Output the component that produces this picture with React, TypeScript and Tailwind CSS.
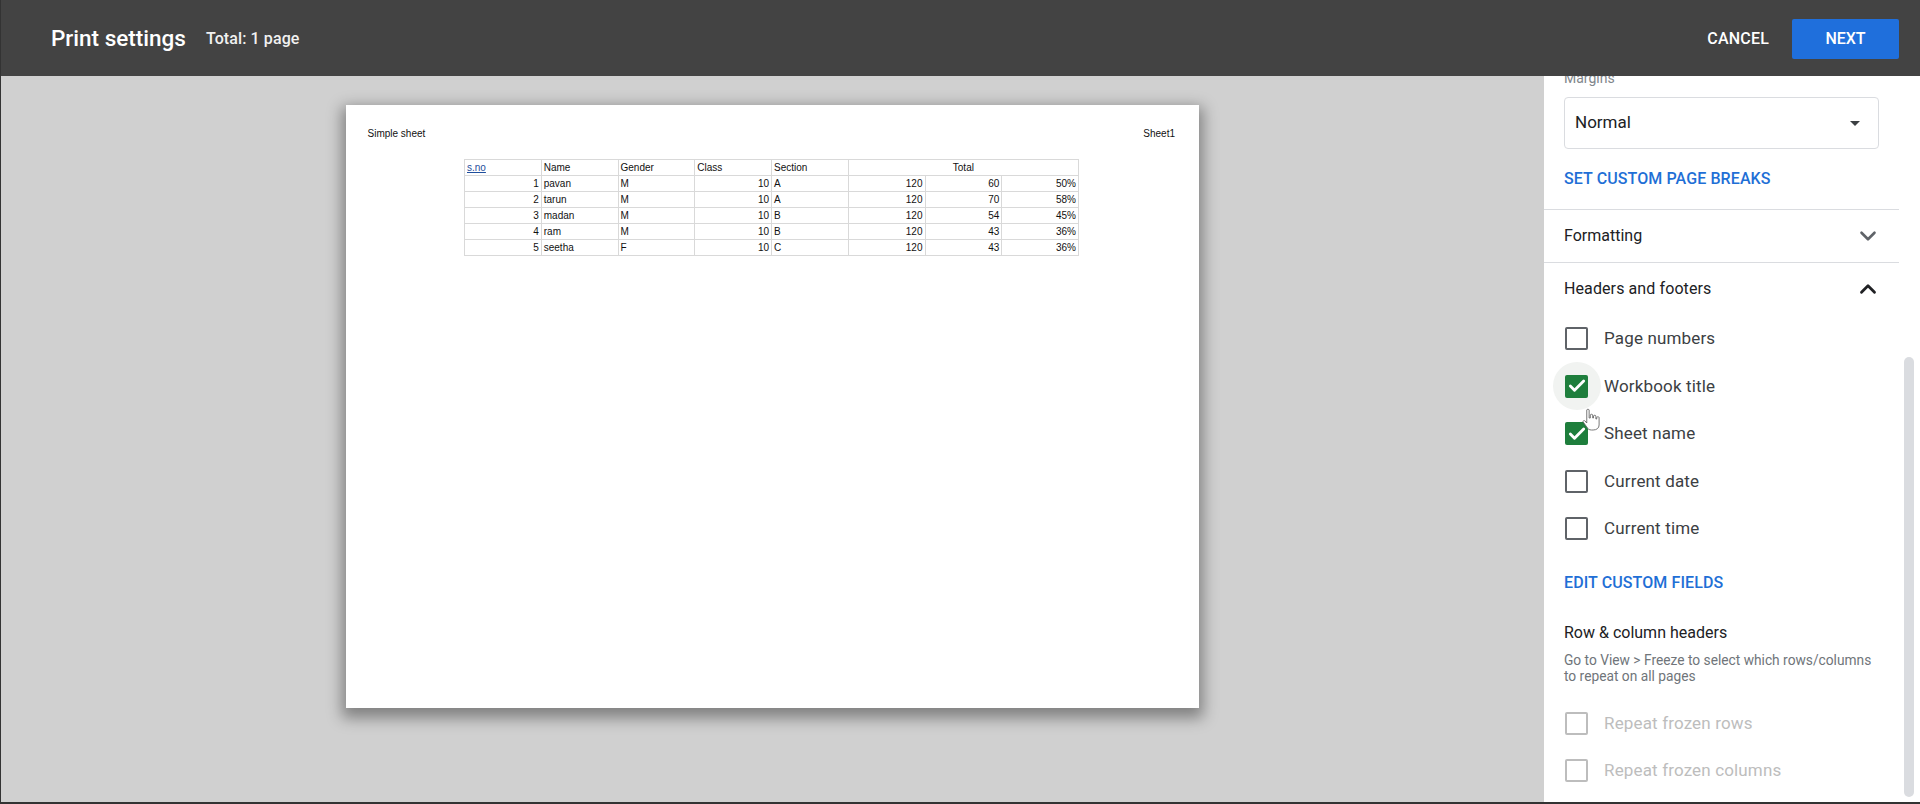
import { Check, ChevronDown, ChevronUp } from "lucide-react";

const rows = [
  ["1", "pavan", "M", "10", "A", "120", "60", "50%"],
  ["2", "tarun", "M", "10", "A", "120", "70", "58%"],
  ["3", "madan", "M", "10", "B", "120", "54", "45%"],
  ["4", "ram", "M", "10", "B", "120", "43", "36%"],
  ["5", "seetha", "F", "10", "C", "120", "43", "36%"],
];

const rightAligned = [0, 3, 5, 6, 7];

function PaperTable() {
  return (
    <table className="w-[615px] table-fixed border-collapse text-[10px] leading-[15px] text-[#111]">
      <tbody>
        <tr className="h-4">
          <td className="border border-[#d9d9d9] px-[2px] text-[#1f4e9c] underline">s.no</td>
          <td className="border border-[#d9d9d9] px-[2px]">Name</td>
          <td className="border border-[#d9d9d9] px-[2px]">Gender</td>
          <td className="border border-[#d9d9d9] px-[2px]">Class</td>
          <td className="border border-[#d9d9d9] px-[2px]">Section</td>
          <td colSpan={3} className="border border-[#d9d9d9] px-[2px] text-center">Total</td>
        </tr>
        {rows.map((row) => (
          <tr key={row[0]} className="h-4">
            {row.map((cell, i) => (
              <td
                key={i}
                className={`border border-[#d9d9d9] px-[2px] ${rightAligned.includes(i) ? "text-right" : "text-left"}`}
              >
                {cell}
              </td>
            ))}
          </tr>
        ))}
      </tbody>
    </table>
  );
}

function Option({ label, checked, disabled, halo }: { label: string; checked?: boolean; disabled?: boolean; halo?: boolean }) {
  return (
    <div className="flex h-[47.5px] items-center pl-px">
      <div className="relative flex size-[23px] items-center justify-center">
        {halo && <div className="absolute -inset-[12.5px] rounded-full bg-[#f1f3f1]" />}
        {checked ? (
          <div className="relative flex size-[23px] items-center justify-center rounded-[2px] bg-[#1e7e3c]">
            <Check size={20} strokeWidth={3.4} className="text-white" />
          </div>
        ) : (
          <div className={`relative size-[23px] rounded-[2px] border-2 ${disabled ? "border-[#bdbdbd]" : "border-[#5f6368]"}`} />
        )}
      </div>
      <span className={`ml-4 text-[17px] tracking-[0.15px] ${disabled ? "text-[#bdbdbd]" : "text-[#3c4043]"}`}>{label}</span>
    </div>
  );
}

export default function App() {
  return (
    <div className="flex h-[804px] w-[1920px] flex-col overflow-hidden border-b-2 border-l border-[#333] bg-[#d0d0d0] font-['Roboto',sans-serif]">
      <header className="flex h-[76px] shrink-0 items-center bg-[#434343] pl-[50px] pr-[21px] pt-[2px] text-white">
        <h1 className="text-[22.5px] font-medium">Print settings</h1>
        <span className="ml-[20px] text-[16px] font-medium tracking-[0.1px] text-[#f1f1f1]">Total: 1 page</span>
        <button className="ml-auto text-[16px] font-medium tracking-[0.2px]">CANCEL</button>
        <button className="ml-[23px] h-10 w-[107px] rounded-[2px] bg-[#1f6fdc] text-[16px] font-medium">NEXT</button>
      </header>

      <div className="flex min-h-0 flex-1">
        <main className="flex flex-1 justify-center pt-[29px]">
          <div className="flex h-[603px] w-[853px] flex-col items-center bg-white pt-[21px] shadow-[0_6px_14px_4px_rgba(0,0,0,0.38)] font-['Liberation_Sans',sans-serif]">
            <div className="flex w-full justify-between pl-[21.5px] pr-[24px] text-[10px] leading-4 text-[#111]">
              <span>Simple sheet</span>
              <span>Sheet1</span>
            </div>
            <div className="mr-[2px] mt-[17px]">
              <PaperTable />
            </div>
          </div>
        </main>

        <aside className="relative flex w-[376px] shrink-0 overflow-hidden bg-white">
          <div className="w-[355px] shrink-0">
            <div className="-mt-[8px] px-5">
              <div className="h-[21px] text-[14px] leading-[21px] text-[#80868b]">Margins</div>
              <div className="mt-[8px] flex h-[52px] w-[315px] items-center justify-between rounded border border-[#dadce0] pl-[10px] pr-[18px] text-[17px] text-[#202124]">
                Normal
                <div className="size-0 border-x-[5px] border-t-[5px] border-x-transparent border-t-[#3c4043]" />
              </div>
              <div className="mt-[20px] text-[16px] font-medium leading-5 tracking-[0.1px] text-[#1f6fd6]">SET CUSTOM PAGE BREAKS</div>
            </div>
            <div className="mt-[20px] flex h-[54px] items-center justify-between border-y border-[#dadce0] pl-5 pr-[18px] text-[16px] text-[#202124]">
              Formatting
              <ChevronDown size={26} strokeWidth={2.4} className="text-[#5f6368]" />
            </div>
            <div className="pl-5 pr-[18px]">
              <div className="flex h-[52px] items-center justify-between text-[16px] tracking-[0.1px] text-[#202124]">
                Headers and footers
                <ChevronUp size={26} strokeWidth={2.6} className="text-[#202124]" />
              </div>
              <div className="flex flex-col">
                <Option label="Page numbers" />
                <Option label="Workbook title" checked halo />
                <Option label="Sheet name" checked />
                <Option label="Current date" />
                <Option label="Current time" />
              </div>
              <div className="mt-[20px] text-[16px] font-medium leading-5 tracking-[0.1px] text-[#1f6fd6]">EDIT CUSTOM FIELDS</div>
              <div className="mt-[30px] text-[16px] leading-5 text-[#202124]">Row &amp; column headers</div>
              <p className="mt-[9px] w-[315px] text-[13.75px] leading-4 text-[#70757a]">
                Go to View &gt; Freeze to select which rows/columns to repeat on all pages
              </p>
              <div className="mt-[16px] flex flex-col">
                <Option label="Repeat frozen rows" disabled />
                <Option label="Repeat frozen columns" disabled />
              </div>
            </div>
          </div>
          <div className="mb-[5px] ml-[5px] mt-[281px] w-[10px] rounded-full bg-[#dadce0]" />

          <svg viewBox="0 0 16 24" preserveAspectRatio="none" className="absolute left-[38px] top-[332px] h-6 w-[19px]" fill="#fff" stroke="#666" strokeWidth="0.8" strokeLinejoin="round">
            <path d="M4 2c0-1 2-1 2 0v8l1 0V7c0-1 2-1 2 0v3h.7V8c0-1 2-1 2 0v3h.7V9.5c0-1 2-1 2 0V17c0 3-2 5-5 5H8c-2 0-3-1-4-3L1 14c-.6-1 .8-2 1.6-1L4 15z" />
          </svg>
        </aside>
      </div>
    </div>
  );
}
